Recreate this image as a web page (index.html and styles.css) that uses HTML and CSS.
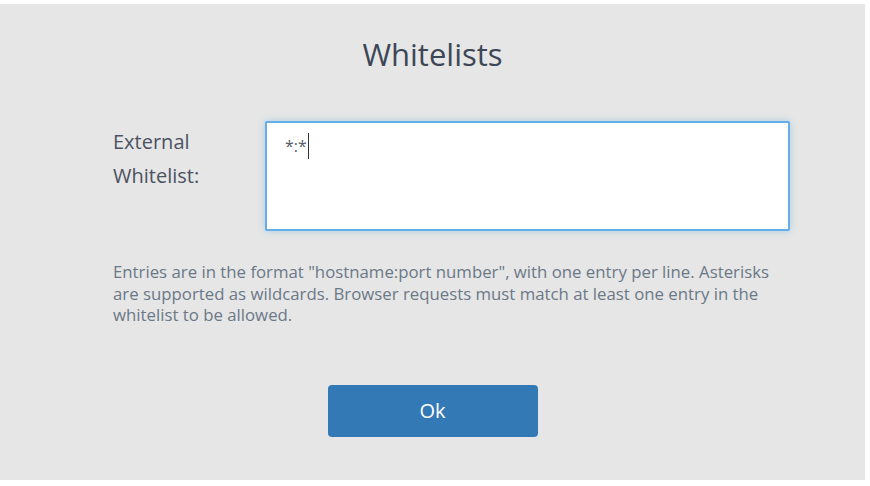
FILE: index.html
```html
<!DOCTYPE html>
<html lang="en">
   <head>
      <meta charset="utf-8" />
      <title>Whitelists</title>
      <link rel="stylesheet" href="styles.css">
   </head>
   <body>
      <div class="dialog">
         <h1 class="title">Whitelists</h1>

         <div class="field">
            <label class="field-label" for="external">External Whitelist:</label>
            <div class="field-box">
               <div class="field-input" id="external">*:*<span class="caret"></span></div>
            </div>
         </div>

         <p class="help">Entries are in the format "hostname:port number", with one entry per line. Asterisks are supported as wildcards. Browser requests must match at least one entry in the whitelist to be allowed.</p>

         <div class="actions">
            <button class="ok" type="button">Ok</button>
         </div>
      </div>
   </body>
</html>
```

FILE: styles.css
```css
body {
   margin: 0;
   background-color: #ffffff;
   font-family: 'Open Sans', 'Noto Sans', sans-serif;
}

.dialog {
   width: 865px;
   height: 476px;
   margin-top: 4px;
   background-color: #e5e6e5;
   box-sizing: border-box;
   padding-top: 30px;
}

.title {
   margin: 0;
   text-align: center;
   font-size: 31px;
   font-weight: 400;
   color: #3d4656;
   line-height: 40px;
}

.field {
   display: flex;
   margin-top: 47px;
   padding-left: 113px;
}

.field-label {
   width: 120px;
   margin-right: 32px;
   padding-top: 4px;
   font-size: 20px;
   line-height: 34px;
   color: #4b5262;
}

.field-box {
   width: 525px;
   height: 110px;
   box-sizing: border-box;
   border: 2px solid #64aeea;
   background-color: #ffffff;
   box-shadow: 0 0 6px rgba(100, 174, 234, 0.45);
   border-radius: 2px;
}

.field-input {
   padding: 10px 0 0 18px;
   font-size: 16px;
   line-height: 24px;
   color: #555c66;
}

.caret {
   display: inline-block;
   width: 1px;
   height: 26px;
   background-color: #333;
   vertical-align: -7px;
   margin-left: 1px;
}

.help {
   margin: 30px 0 0 113px;
   width: 672px;
   font-size: 16.8px;
   line-height: 21.5px;
   color: #6c7888;
}

.actions {
   display: flex;
   justify-content: center;
   margin-top: 59px;
}

.ok {
   width: 210px;
   height: 52px;
   border: none;
   border-radius: 4px;
   background-color: #3379b5;
   color: #ffffff;
   font-family: 'Open Sans', 'Noto Sans', sans-serif;
   font-size: 20px;
   cursor: pointer;
}
```
